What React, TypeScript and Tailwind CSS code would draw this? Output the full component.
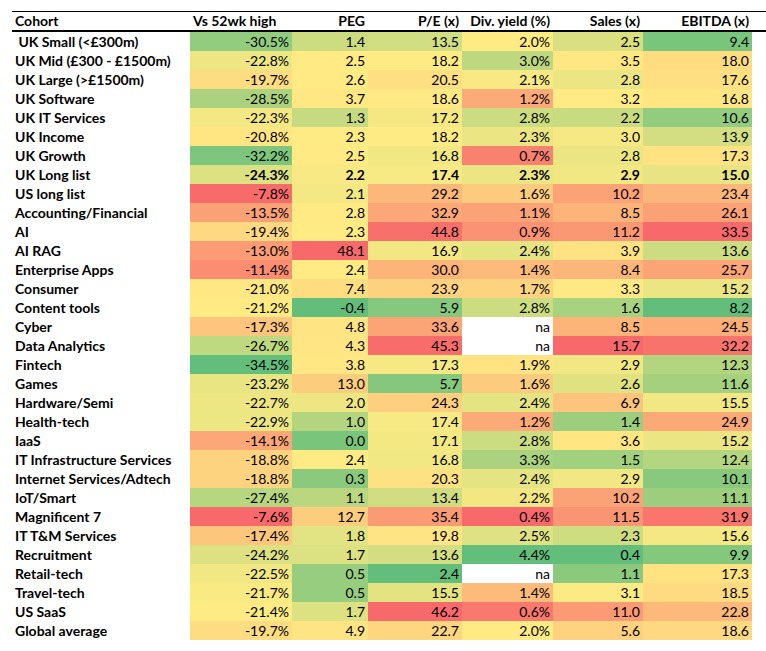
import React from 'react'

type Row = {
  name: string
  values: (number | null)[]
  bold?: boolean
}

const rows: Row[] = [
  { name: '\u00a0UK Small (<£300m)', values: [-30.5, 1.4, 13.5, 2.0, 2.5, 9.4] },
  { name: 'UK Mid (£300 - £1500m)', values: [-22.8, 2.5, 18.2, 3.0, 3.5, 18.0] },
  { name: 'UK Large (>£1500m)', values: [-19.7, 2.6, 20.5, 2.1, 2.8, 17.6] },
  { name: 'UK Software', values: [-28.5, 3.7, 18.6, 1.2, 3.2, 16.8] },
  { name: 'UK IT Services', values: [-22.3, 1.3, 17.2, 2.8, 2.2, 10.6] },
  { name: 'UK Income', values: [-20.8, 2.3, 18.2, 2.3, 3.0, 13.9] },
  { name: 'UK Growth', values: [-32.2, 2.5, 16.8, 0.7, 2.8, 17.3] },
  { name: 'UK Long list', values: [-24.3, 2.2, 17.4, 2.3, 2.9, 15.0], bold: true },
  { name: 'US long list', values: [-7.8, 2.1, 29.2, 1.6, 10.2, 23.4] },
  { name: 'Accounting/Financial', values: [-13.5, 2.8, 32.9, 1.1, 8.5, 26.1] },
  { name: 'AI', values: [-19.4, 2.3, 44.8, 0.9, 11.2, 33.5] },
  { name: 'AI RAG', values: [-13.0, 48.1, 16.9, 2.4, 3.9, 13.6] },
  { name: 'Enterprise Apps', values: [-11.4, 2.4, 30.0, 1.4, 8.4, 25.7] },
  { name: 'Consumer', values: [-21.0, 7.4, 23.9, 1.7, 3.3, 15.2] },
  { name: 'Content tools', values: [-21.2, -0.4, 5.9, 2.8, 1.6, 8.2] },
  { name: 'Cyber', values: [-17.3, 4.8, 33.6, null, 8.5, 24.5] },
  { name: 'Data Analytics', values: [-26.7, 4.3, 45.3, null, 15.7, 32.2] },
  { name: 'Fintech', values: [-34.5, 3.8, 17.3, 1.9, 2.9, 12.3] },
  { name: 'Games', values: [-23.2, 13.0, 5.7, 1.6, 2.6, 11.6] },
  { name: 'Hardware/Semi', values: [-22.7, 2.0, 24.3, 2.4, 6.9, 15.5] },
  { name: 'Health-tech', values: [-22.9, 1.0, 17.4, 1.2, 1.4, 24.9] },
  { name: 'IaaS', values: [-14.1, 0.0, 17.1, 2.8, 3.6, 15.2] },
  { name: 'IT Infrastructure Services', values: [-18.8, 2.4, 16.8, 3.3, 1.5, 12.4] },
  { name: 'Internet Services/Adtech', values: [-18.8, 0.3, 20.3, 2.4, 2.9, 10.1] },
  { name: 'IoT/Smart', values: [-27.4, 1.1, 13.4, 2.2, 10.2, 11.1] },
  { name: 'Magnificent 7', values: [-7.6, 12.7, 35.4, 0.4, 11.5, 31.9] },
  { name: 'IT T&M Services', values: [-17.4, 1.8, 19.8, 2.5, 2.3, 15.6] },
  { name: 'Recruitment', values: [-24.2, 1.7, 13.6, 4.4, 0.4, 9.9] },
  { name: 'Retail-tech', values: [-22.5, 0.5, 2.4, null, 1.1, 17.3] },
  { name: 'Travel-tech', values: [-21.7, 0.5, 15.5, 1.4, 3.1, 18.5] },
  { name: 'US SaaS', values: [-21.4, 1.7, 46.2, 0.6, 11.0, 22.8] },
  { name: 'Global average', values: [-19.7, 4.9, 22.7, 2.0, 5.6, 18.6] },
]

// true = higher value is better (green)
const highIsGreen = [false, false, false, true, false, false]
const isPercent = [true, false, false, true, false, false]

const RED = [248, 105, 107]
const YELLOW = [255, 235, 132]
const GREEN = [99, 190, 123]

const mix = (a: number[], b: number[], t: number) =>
  `rgb(${a.map((v, i) => Math.round(v + (b[i] - v) * t)).join(',')})`

const median = (nums: number[]) => {
  const s = [...nums].sort((a, b) => a - b)
  const m = s.length / 2
  return s.length % 2 ? s[Math.floor(m)] : (s[m - 1] + s[m]) / 2
}

const scales = highIsGreen.map((high, col) => {
  const nums = rows.map(r => r.values[col]).filter((v): v is number => v !== null)
  return { min: Math.min(...nums), max: Math.max(...nums), mid: median(nums), high }
})

const cellColor = (col: number, v: number | null) => {
  if (v === null) return '#ffffff'
  const { min, max, mid, high } = scales[col]
  const lowColor = high ? RED : GREEN
  const highColor = high ? GREEN : RED
  if (v <= mid) return mix(lowColor, YELLOW, mid === min ? 1 : (v - min) / (mid - min))
  return mix(YELLOW, highColor, max === mid ? 0 : (v - mid) / (max - mid))
}

const format = (col: number, v: number | null) =>
  v === null ? 'na' : `${v.toFixed(1)}${isPercent[col] ? '%' : ''}`

const headers = ['PEG', 'P/E (x)', 'Div. yield (%)', 'Sales (x)', 'EBITDA (x)']

const gridCols = 'grid grid-cols-[178px_102px_76px_94px_91px_90px_109px_1fr]'

export default function App() {
  return (
    <div className="w-[766px] h-[651px] overflow-hidden bg-white pl-[12px] pt-[11px] font-['Lato',sans-serif] text-[14px] text-black">
      <div className={`${gridCols} h-[21px] border-t border-b-2 border-black font-bold leading-[18px] w-[800px] whitespace-nowrap`}>
        <div className="pl-[3px]">Cohort</div>
        <div className="pl-[3px]">Vs 52wk high</div>
        {headers.map(h => (
          <div key={h} className="text-right pr-[3px]">{h}</div>
        ))}
        <div />
      </div>
      {rows.map(row => (
        <div key={row.name} className={`${gridCols} h-[19px] leading-[19px] w-[800px]`}>
          <div className="pl-[3px] font-bold whitespace-nowrap">{row.name}</div>
          {row.values.map((v, col) => (
            <div
              key={col}
              className={`text-right pr-[3px] ${row.bold ? 'font-bold' : ''}`}
              style={{ backgroundColor: cellColor(col, v) }}
            >
              {format(col, v)}
            </div>
          ))}
          <div />
        </div>
      ))}
    </div>
  )
}
